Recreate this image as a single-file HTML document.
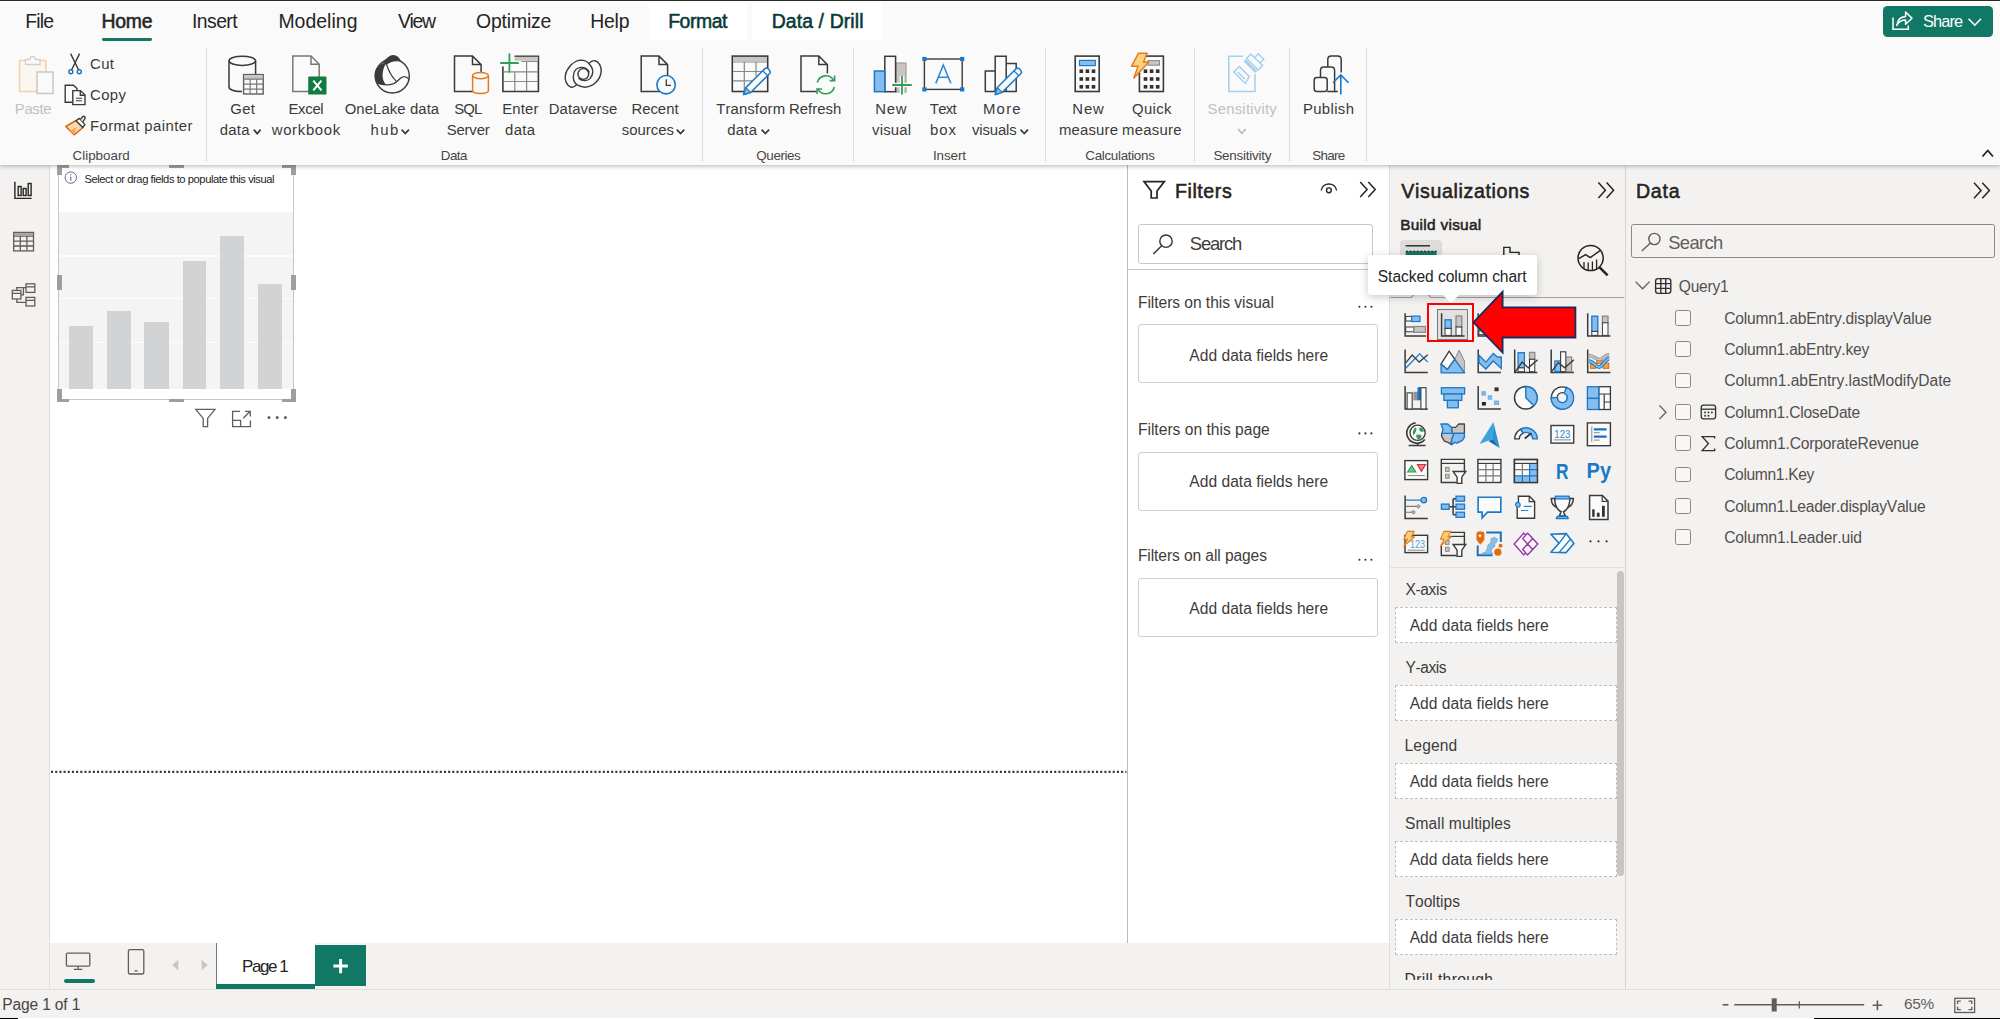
<!DOCTYPE html>
<html lang="en"><head><meta charset="utf-8"><title>Power BI Desktop</title><style>
html,body{margin:0;padding:0}
body{width:2000px;height:1019px;overflow:hidden;position:relative;background:#fff;font-family:"Liberation Sans",sans-serif}
.a{position:absolute}
.t{position:absolute;white-space:nowrap;margin:0;padding:0;font-kerning:none;font-variant-ligatures:none}
svg{position:absolute;left:0;top:0;overflow:visible}
</style></head><body>
<!-- gen_canvas -->
<div class="a" style="left:0.00px;top:164.00px;width:49.40px;height:825.00px;background:#f3f2f1;border-right:1px solid #e1dfdd"></div>
<div class="a" style="left:58.00px;top:164.00px;width:235.80px;height:235.80px;border:1px solid #c8c6c4;box-sizing:border-box;background:#fff"></div>
<div class="a" style="left:59.00px;top:212.20px;width:233.80px;height:176.80px;background:#f4f4f4"></div>
<div class="a" style="left:59.00px;top:254.90px;width:233.80px;height:1.80px;background:#fcfcfc"></div>
<div class="a" style="left:59.00px;top:297.50px;width:233.80px;height:1.80px;background:#fcfcfc"></div>
<div class="a" style="left:59.00px;top:341.50px;width:233.80px;height:1.80px;background:#fcfcfc"></div>
<div class="a" style="left:69.20px;top:325.70px;width:24.10px;height:63.30px;background:#d2d3d5"></div>
<div class="a" style="left:106.80px;top:310.70px;width:24.20px;height:78.30px;background:#d2d3d5"></div>
<div class="a" style="left:144.30px;top:322.20px;width:24.30px;height:66.80px;background:#d2d3d5"></div>
<div class="a" style="left:182.60px;top:260.60px;width:23.70px;height:128.40px;background:#d2d3d5"></div>
<div class="a" style="left:220.20px;top:235.80px;width:23.70px;height:153.20px;background:#d2d3d5"></div>
<div class="a" style="left:257.90px;top:284.10px;width:23.80px;height:104.90px;background:#d2d3d5"></div>
<div class="a" style="left:56.60px;top:165.00px;width:12.60px;height:3.30px;background:#a09e9c"></div>
<div class="a" style="left:56.60px;top:165.00px;width:5.00px;height:10.40px;background:#a09e9c"></div>
<div class="a" style="left:168.50px;top:165.00px;width:15.50px;height:3.40px;background:#a09e9c"></div>
<div class="a" style="left:282.20px;top:165.00px;width:13.50px;height:3.30px;background:#a09e9c"></div>
<div class="a" style="left:290.80px;top:165.00px;width:4.90px;height:10.40px;background:#a09e9c"></div>
<div class="a" style="left:56.60px;top:275.40px;width:5.00px;height:15.10px;background:#a09e9c"></div>
<div class="a" style="left:290.80px;top:275.40px;width:4.90px;height:15.10px;background:#a09e9c"></div>
<div class="a" style="left:56.60px;top:389.20px;width:5.00px;height:13.00px;background:#a09e9c"></div>
<div class="a" style="left:56.60px;top:398.60px;width:12.60px;height:3.60px;background:#a09e9c"></div>
<div class="a" style="left:168.50px;top:398.60px;width:15.50px;height:3.60px;background:#a09e9c"></div>
<div class="a" style="left:282.20px;top:398.60px;width:13.50px;height:3.60px;background:#a09e9c"></div>
<div class="a" style="left:290.80px;top:389.20px;width:4.90px;height:13.00px;background:#a09e9c"></div>
<span class="t" style="left:84.49px;top:171.80px;font-size:11.20px;line-height:15px;letter-spacing:-0.444px;color:#252423;">Select or drag fields to populate this visual</span>
<!-- gen_bottom -->
<div class="a" style="left:50.00px;top:943.00px;width:1339.40px;height:46.00px;background:#f3f2f1"></div>
<div class="a" style="left:0.00px;top:988.80px;width:2000.00px;height:30.20px;background:#f3f2f1;border-top:1px solid #e1dfdd;box-sizing:border-box"></div>
<div class="a" style="left:63.80px;top:979.10px;width:31.10px;height:4.40px;background:#117865;border-radius:2.2px"></div>
<div class="a" style="left:216.40px;top:943.00px;width:98.40px;height:45.60px;background:#fff;border-left:1px solid #7a7876;box-sizing:border-box"></div>
<div class="a" style="left:216.40px;top:983.70px;width:98.40px;height:4.90px;background:#117865"></div>
<span class="t" style="left:242.01px;top:954.60px;font-size:17.00px;line-height:23px;letter-spacing:-1.411px;color:#252423;">Page 1</span>
<div class="a" style="left:314.80px;top:944.90px;width:51.30px;height:41.40px;background:#117865"></div>
<span class="t" style="left:2.32px;top:994.20px;font-size:15.60px;line-height:21px;letter-spacing:-0.176px;color:#484644;">Page 1 of 1</span>
<span class="t" style="left:1903.92px;top:993.30px;font-size:15.40px;line-height:21px;letter-spacing:-0.246px;color:#605e5c;">65%</span>
<div class="a" style="left:0.00px;top:1017.60px;width:2000.00px;height:1.40px;background:#fff"></div>
<div class="a" style="left:0.00px;top:1017.60px;width:18.00px;height:1.40px;background:#000"></div>
<div class="a" style="left:1814.30px;top:1017.60px;width:185.70px;height:1.40px;background:#000"></div>
<!-- gen_filters -->
<div class="a" style="left:1127.00px;top:164.00px;width:262.40px;height:779.00px;background:#fff;border-left:1px solid #bdbbb9;box-sizing:border-box"></div>
<span class="t" style="left:1174.94px;top:177.80px;font-size:19.60px;line-height:26px;letter-spacing:0.577px;color:#252423;-webkit-text-stroke:0.55px #252423;">Filters</span>
<div class="a" style="left:1138.20px;top:224.40px;width:234.50px;height:39.20px;border:1px solid #c8c6c4;border-radius:3px;box-sizing:border-box;background:#fff"></div>
<span class="t" style="left:1189.86px;top:231.80px;font-size:18.40px;line-height:24px;letter-spacing:-1.174px;color:#3e3c3a;">Search</span>
<div class="a" style="left:1128.00px;top:268.60px;width:261.40px;height:1.20px;background:#c8c6c4"></div>
<span class="t" style="left:1137.92px;top:292.00px;font-size:15.60px;line-height:21px;letter-spacing:-0.046px;color:#3e3c3a;">Filters on this visual</span>
<div class="a" style="left:1138.30px;top:324.40px;width:239.80px;height:59.10px;border:1px solid #d2d0ce;border-radius:3px;box-sizing:border-box;background:#fff"></div>
<span class="t" style="left:1189.37px;top:344.50px;font-size:15.60px;line-height:21px;letter-spacing:0.003px;color:#3e3c3a;">Add data fields here</span>
<span class="t" style="left:1137.92px;top:418.60px;font-size:15.60px;line-height:21px;letter-spacing:0.004px;color:#3e3c3a;">Filters on this page</span>
<div class="a" style="left:1138.30px;top:451.70px;width:239.80px;height:59.00px;border:1px solid #d2d0ce;border-radius:3px;box-sizing:border-box;background:#fff"></div>
<span class="t" style="left:1189.37px;top:470.80px;font-size:15.60px;line-height:21px;letter-spacing:0.003px;color:#3e3c3a;">Add data fields here</span>
<span class="t" style="left:1137.92px;top:544.90px;font-size:15.60px;line-height:21px;letter-spacing:-0.094px;color:#3e3c3a;">Filters on all pages</span>
<div class="a" style="left:1138.30px;top:578.30px;width:239.80px;height:58.50px;border:1px solid #d2d0ce;border-radius:3px;box-sizing:border-box;background:#fff"></div>
<span class="t" style="left:1189.37px;top:597.80px;font-size:15.60px;line-height:21px;letter-spacing:0.003px;color:#3e3c3a;">Add data fields here</span>
<!-- gen_viz -->
<div class="a" style="left:1389.40px;top:164.00px;width:235.60px;height:825.00px;background:#f3f2f1;border-left:1px solid #e1dfdd;box-sizing:border-box"></div>
<span class="t" style="left:1401.36px;top:177.70px;font-size:19.60px;line-height:26px;letter-spacing:0.635px;color:#252423;-webkit-text-stroke:0.55px #252423;">Visualizations</span>
<span class="t" style="left:1400.19px;top:214.20px;font-size:15.40px;line-height:21px;letter-spacing:0.291px;color:#252423;-webkit-text-stroke:0.55px #252423;">Build visual</span>
<div class="a" style="left:1400.10px;top:240.30px;width:41.50px;height:49.70px;background:#dddcdb;border-radius:4px"></div>
<div class="a" style="left:1436.60px;top:308.80px;width:31.40px;height:30.80px;background:#e3e2e1;border:1px solid #7a7876;box-sizing:border-box"></div>
<div class="a" style="left:1427.20px;top:303.00px;width:46.60px;height:38.60px;border:2px solid #ff0000;box-sizing:border-box;z-index:3"></div>
<svg width="2000" height="1019" viewBox="0 0 2000 1019" style="z-index:10"><path d="M1473.4 322.3 L1502.6 291.8 V307.3 H1575.4 V337.5 H1502.6 V352.6 Z" fill="#ff0000" stroke="#1f2a5a" stroke-width="1.8" stroke-linejoin="miter"/></svg>
<div class="a" style="left:1390.40px;top:567.00px;width:234.00px;height:1.00px;background:#e1dfdd"></div>
<div class="a" style="left:1617.30px;top:570.80px;width:7.00px;height:304.80px;background:#c8c6c4;border-radius:3.5px"></div>
<span class="t" style="left:1405.45px;top:579.40px;font-size:15.60px;line-height:21px;letter-spacing:-0.366px;color:#3e3c3a;">X-axis</span>
<div class="a" style="left:1395.30px;top:607.20px;width:221.50px;height:35.70px;background:#fff;border:1px dashed #c2c0be;box-sizing:border-box"></div>
<span class="t" style="left:1409.67px;top:614.70px;font-size:15.60px;line-height:21px;letter-spacing:0.019px;color:#3e3c3a;">Add data fields here</span>
<span class="t" style="left:1405.46px;top:657.40px;font-size:15.60px;line-height:21px;letter-spacing:-0.447px;color:#3e3c3a;">Y-axis</span>
<div class="a" style="left:1395.30px;top:685.20px;width:221.50px;height:35.70px;background:#fff;border:1px dashed #c2c0be;box-sizing:border-box"></div>
<span class="t" style="left:1409.67px;top:692.70px;font-size:15.60px;line-height:21px;letter-spacing:0.019px;color:#3e3c3a;">Add data fields here</span>
<span class="t" style="left:1404.52px;top:735.40px;font-size:15.60px;line-height:21px;letter-spacing:0.146px;color:#3e3c3a;">Legend</span>
<div class="a" style="left:1395.30px;top:763.20px;width:221.50px;height:35.70px;background:#fff;border:1px dashed #c2c0be;box-sizing:border-box"></div>
<span class="t" style="left:1409.67px;top:770.70px;font-size:15.60px;line-height:21px;letter-spacing:0.019px;color:#3e3c3a;">Add data fields here</span>
<span class="t" style="left:1405.09px;top:813.40px;font-size:15.60px;line-height:21px;letter-spacing:0.070px;color:#3e3c3a;">Small multiples</span>
<div class="a" style="left:1395.30px;top:841.20px;width:221.50px;height:35.70px;background:#fff;border:1px dashed #c2c0be;box-sizing:border-box"></div>
<span class="t" style="left:1409.67px;top:848.70px;font-size:15.60px;line-height:21px;letter-spacing:0.019px;color:#3e3c3a;">Add data fields here</span>
<span class="t" style="left:1405.45px;top:891.40px;font-size:15.60px;line-height:21px;letter-spacing:-0.001px;color:#3e3c3a;">Tooltips</span>
<div class="a" style="left:1395.30px;top:919.20px;width:221.50px;height:35.70px;background:#fff;border:1px dashed #c2c0be;box-sizing:border-box"></div>
<span class="t" style="left:1409.67px;top:926.70px;font-size:15.60px;line-height:21px;letter-spacing:0.019px;color:#3e3c3a;">Add data fields here</span>
<div class="a" style="left:1395px;top:960px;width:220px;height:20px;overflow:hidden"><span class="t" style="left:9.52px;top:9.40px;font-size:15.60px;line-height:21px;letter-spacing:0.366px;color:#323130;">Drill through</span></div>
<div class="a" style="left:1367.80px;top:254.80px;width:169.00px;height:40.20px;background:#fff;border-radius:3px;box-shadow:0 2px 9px rgba(0,0,0,.22);z-index:8"></div>
<div class="a" style="left:1443.2px;top:294.8px;width:0;height:0;border-left:8.6px solid transparent;border-right:8.6px solid transparent;border-top:8px solid #fff;z-index:9"></div>
<span class="t" style="left:1377.79px;top:265.80px;font-size:15.60px;line-height:21px;letter-spacing:-0.062px;color:#252423;z-index:9;">Stacked column chart</span>
<!-- gen_data -->
<div class="a" style="left:1624.50px;top:164.00px;width:375.50px;height:825.00px;background:#f3f2f1;border-left:1px solid #d6d4d2;box-sizing:border-box"></div>
<span class="t" style="left:1635.94px;top:178.00px;font-size:19.60px;line-height:26px;letter-spacing:0.769px;color:#252423;-webkit-text-stroke:0.55px #252423;">Data</span>
<div class="a" style="left:1631.20px;top:224.30px;width:363.70px;height:33.90px;border:1px solid #8a8886;border-radius:2.5px;box-sizing:border-box;background:#f3f2f1"></div>
<span class="t" style="left:1668.26px;top:230.60px;font-size:18.40px;line-height:24px;letter-spacing:-0.654px;color:#605e5c;">Search</span>
<span class="t" style="left:1678.76px;top:275.80px;font-size:15.60px;line-height:21px;letter-spacing:-0.231px;color:#514f4d;">Query1</span>
<span class="t" style="left:1724.21px;top:307.50px;font-size:15.60px;line-height:21px;letter-spacing:-0.212px;color:#514f4d;">Column1.abEntry.displayValue</span>
<div class="a" style="left:1675.40px;top:310.00px;width:15.60px;height:15.60px;border:1px solid #8a8886;border-radius:2.5px;box-sizing:border-box;background:#f8f7f6"></div>
<span class="t" style="left:1724.21px;top:338.85px;font-size:15.60px;line-height:21px;letter-spacing:-0.223px;color:#514f4d;">Column1.abEntry.key</span>
<div class="a" style="left:1675.40px;top:341.35px;width:15.60px;height:15.60px;border:1px solid #8a8886;border-radius:2.5px;box-sizing:border-box;background:#f8f7f6"></div>
<span class="t" style="left:1724.21px;top:370.20px;font-size:15.60px;line-height:21px;letter-spacing:-0.033px;color:#514f4d;">Column1.abEntry.lastModifyDate</span>
<div class="a" style="left:1675.40px;top:372.70px;width:15.60px;height:15.60px;border:1px solid #8a8886;border-radius:2.5px;box-sizing:border-box;background:#f8f7f6"></div>
<span class="t" style="left:1724.21px;top:401.55px;font-size:15.60px;line-height:21px;letter-spacing:-0.226px;color:#514f4d;">Column1.CloseDate</span>
<div class="a" style="left:1675.40px;top:404.05px;width:15.60px;height:15.60px;border:1px solid #8a8886;border-radius:2.5px;box-sizing:border-box;background:#f8f7f6"></div>
<span class="t" style="left:1724.21px;top:432.90px;font-size:15.60px;line-height:21px;letter-spacing:-0.161px;color:#514f4d;">Column1.CorporateRevenue</span>
<div class="a" style="left:1675.40px;top:435.40px;width:15.60px;height:15.60px;border:1px solid #8a8886;border-radius:2.5px;box-sizing:border-box;background:#f8f7f6"></div>
<span class="t" style="left:1724.21px;top:464.25px;font-size:15.60px;line-height:21px;letter-spacing:-0.352px;color:#514f4d;">Column1.Key</span>
<div class="a" style="left:1675.40px;top:466.75px;width:15.60px;height:15.60px;border:1px solid #8a8886;border-radius:2.5px;box-sizing:border-box;background:#f8f7f6"></div>
<span class="t" style="left:1724.21px;top:495.60px;font-size:15.60px;line-height:21px;letter-spacing:-0.256px;color:#514f4d;">Column1.Leader.displayValue</span>
<div class="a" style="left:1675.40px;top:498.10px;width:15.60px;height:15.60px;border:1px solid #8a8886;border-radius:2.5px;box-sizing:border-box;background:#f8f7f6"></div>
<span class="t" style="left:1724.21px;top:526.95px;font-size:15.60px;line-height:21px;letter-spacing:-0.158px;color:#514f4d;">Column1.Leader.uid</span>
<div class="a" style="left:1675.40px;top:529.45px;width:15.60px;height:15.60px;border:1px solid #8a8886;border-radius:2.5px;box-sizing:border-box;background:#f8f7f6"></div>
<!-- gen_ribbon -->
<div class="a" style="left:0.00px;top:0.00px;width:2000.00px;height:164.60px;background:#fafafa;box-shadow:0 0.5px 4.5px rgba(0,0,0,.30);z-index:5"></div>
<div class="a" style="left:0.00px;top:0.00px;width:2000.00px;height:1.20px;background:#2b2a29;z-index:6"></div>
<div class="a" style="left:0.00px;top:1.20px;width:2000.00px;height:1.80px;background:#fff;z-index:6"></div>
<div class="a" style="left:648.80px;top:3.00px;width:98.10px;height:37.30px;background:#fff;z-index:6"></div>
<div class="a" style="left:751.80px;top:3.00px;width:129.80px;height:37.30px;background:#fff;z-index:6"></div>
<div class="a" style="left:102.00px;top:37.50px;width:50.20px;height:3.10px;background:#117865;border-radius:1.4px;z-index:6"></div>
<span class="t" style="left:25.21px;top:8.20px;font-size:19.40px;line-height:26px;letter-spacing:-0.802px;color:#252423;z-index:7;">File</span>
<span class="t" style="left:101.46px;top:8.20px;font-size:19.40px;line-height:26px;letter-spacing:-0.199px;color:#252423;-webkit-text-stroke:0.55px #252423;z-index:7;">Home</span>
<span class="t" style="left:192.01px;top:8.20px;font-size:19.40px;line-height:26px;letter-spacing:-0.577px;color:#252423;z-index:7;">Insert</span>
<span class="t" style="left:278.41px;top:8.20px;font-size:19.40px;line-height:26px;letter-spacing:0.045px;color:#252423;z-index:7;">Modeling</span>
<span class="t" style="left:397.91px;top:8.20px;font-size:19.40px;line-height:26px;letter-spacing:-1.337px;color:#252423;z-index:7;">View</span>
<span class="t" style="left:476.08px;top:8.20px;font-size:19.40px;line-height:26px;letter-spacing:-0.180px;color:#252423;z-index:7;">Optimize</span>
<span class="t" style="left:590.21px;top:8.20px;font-size:19.40px;line-height:26px;letter-spacing:-0.198px;color:#252423;z-index:7;">Help</span>
<span class="t" style="left:668.16px;top:8.20px;font-size:19.40px;line-height:26px;letter-spacing:-0.441px;color:#0b3a38;-webkit-text-stroke:0.55px #0b3a38;z-index:7;">Format</span>
<span class="t" style="left:771.66px;top:8.20px;font-size:19.40px;line-height:26px;letter-spacing:0.122px;color:#0b3a38;-webkit-text-stroke:0.55px #0b3a38;z-index:7;">Data / Drill</span>
<div class="a" style="left:1883.10px;top:6.20px;width:109.50px;height:31.20px;background:#117865;border-radius:4.5px;z-index:6"></div>
<span class="t" style="left:1923.06px;top:9.90px;font-size:16.40px;line-height:22px;letter-spacing:-0.897px;color:#fff;z-index:7;">Share</span>
<div class="a" style="left:205.50px;top:48.30px;width:1.20px;height:114.00px;background:#dcdbda;z-index:6"></div>
<div class="a" style="left:701.90px;top:48.30px;width:1.20px;height:114.00px;background:#dcdbda;z-index:6"></div>
<div class="a" style="left:853.30px;top:48.30px;width:1.20px;height:114.00px;background:#dcdbda;z-index:6"></div>
<div class="a" style="left:1045.20px;top:48.30px;width:1.20px;height:114.00px;background:#dcdbda;z-index:6"></div>
<div class="a" style="left:1194.20px;top:48.30px;width:1.20px;height:114.00px;background:#dcdbda;z-index:6"></div>
<div class="a" style="left:1289.20px;top:48.30px;width:1.20px;height:114.00px;background:#dcdbda;z-index:6"></div>
<div class="a" style="left:1366.30px;top:48.30px;width:1.20px;height:114.00px;background:#dcdbda;z-index:6"></div>
<span class="t" style="left:14.78px;top:99.40px;font-size:14.90px;line-height:20px;letter-spacing:-0.304px;color:#c2c0be;z-index:7;">Paste</span>
<span class="t" style="left:90.04px;top:53.70px;font-size:14.90px;line-height:20px;letter-spacing:0.390px;color:#3b3a39;z-index:7;">Cut</span>
<span class="t" style="left:90.04px;top:85.10px;font-size:14.90px;line-height:20px;letter-spacing:0.401px;color:#3b3a39;z-index:7;">Copy</span>
<span class="t" style="left:89.98px;top:116.20px;font-size:14.90px;line-height:20px;letter-spacing:0.429px;color:#3b3a39;z-index:7;">Format painter</span>
<span class="t" style="left:230.25px;top:99.40px;font-size:14.90px;line-height:20px;letter-spacing:0.321px;color:#3b3a39;z-index:7;">Get</span>
<span class="t" style="left:219.77px;top:120.00px;font-size:14.90px;line-height:20px;letter-spacing:0.242px;color:#3b3a39;z-index:7;">data</span>
<span class="t" style="left:288.48px;top:99.40px;font-size:14.90px;line-height:20px;letter-spacing:-0.304px;color:#3b3a39;z-index:7;">Excel</span>
<span class="t" style="left:271.72px;top:120.00px;font-size:14.90px;line-height:20px;letter-spacing:0.684px;color:#3b3a39;z-index:7;">workbook</span>
<span class="t" style="left:344.69px;top:99.40px;font-size:14.90px;line-height:20px;letter-spacing:0.081px;color:#3b3a39;z-index:7;">OneLake data</span>
<span class="t" style="left:370.57px;top:120.00px;font-size:14.90px;line-height:20px;letter-spacing:1.449px;color:#3b3a39;z-index:7;">hub</span>
<span class="t" style="left:454.32px;top:99.40px;font-size:14.90px;line-height:20px;letter-spacing:-0.922px;color:#3b3a39;z-index:7;">SQL</span>
<span class="t" style="left:446.72px;top:120.00px;font-size:14.90px;line-height:20px;letter-spacing:-0.172px;color:#3b3a39;z-index:7;">Server</span>
<span class="t" style="left:502.18px;top:99.40px;font-size:14.90px;line-height:20px;letter-spacing:0.164px;color:#3b3a39;z-index:7;">Enter</span>
<span class="t" style="left:505.07px;top:120.00px;font-size:14.90px;line-height:20px;letter-spacing:0.309px;color:#3b3a39;z-index:7;">data</span>
<span class="t" style="left:548.78px;top:99.40px;font-size:14.90px;line-height:20px;letter-spacing:0.084px;color:#3b3a39;z-index:7;">Dataverse</span>
<span class="t" style="left:631.38px;top:99.40px;font-size:14.90px;line-height:20px;letter-spacing:0.004px;color:#3b3a39;z-index:7;">Recent</span>
<span class="t" style="left:621.69px;top:120.00px;font-size:14.90px;line-height:20px;letter-spacing:0.014px;color:#3b3a39;z-index:7;">sources</span>
<span class="t" style="left:716.17px;top:99.40px;font-size:14.90px;line-height:20px;letter-spacing:0.129px;color:#3b3a39;z-index:7;">Transform</span>
<span class="t" style="left:727.37px;top:120.00px;font-size:14.90px;line-height:20px;letter-spacing:0.209px;color:#3b3a39;z-index:7;">data</span>
<span class="t" style="left:788.88px;top:99.40px;font-size:14.90px;line-height:20px;letter-spacing:0.036px;color:#3b3a39;z-index:7;">Refresh</span>
<span class="t" style="left:875.28px;top:99.40px;font-size:14.90px;line-height:20px;letter-spacing:0.689px;color:#3b3a39;z-index:7;">New</span>
<span class="t" style="left:872.05px;top:120.00px;font-size:14.90px;line-height:20px;letter-spacing:0.171px;color:#3b3a39;z-index:7;">visual</span>
<span class="t" style="left:929.87px;top:99.40px;font-size:14.90px;line-height:20px;letter-spacing:-0.711px;color:#3b3a39;z-index:7;">Text</span>
<span class="t" style="left:930.04px;top:120.00px;font-size:14.90px;line-height:20px;letter-spacing:0.899px;color:#3b3a39;z-index:7;">box</span>
<span class="t" style="left:982.98px;top:99.40px;font-size:14.90px;line-height:20px;letter-spacing:1.246px;color:#3b3a39;z-index:7;">More</span>
<span class="t" style="left:972.05px;top:120.00px;font-size:14.90px;line-height:20px;letter-spacing:-0.159px;color:#3b3a39;z-index:7;">visuals</span>
<span class="t" style="left:1072.28px;top:99.40px;font-size:14.90px;line-height:20px;letter-spacing:0.889px;color:#3b3a39;z-index:7;">New</span>
<span class="t" style="left:1058.91px;top:120.00px;font-size:14.90px;line-height:20px;letter-spacing:0.180px;color:#3b3a39;z-index:7;">measure</span>
<span class="t" style="left:1131.99px;top:99.40px;font-size:14.90px;line-height:20px;letter-spacing:0.349px;color:#3b3a39;z-index:7;">Quick</span>
<span class="t" style="left:1122.01px;top:120.00px;font-size:14.90px;line-height:20px;letter-spacing:0.247px;color:#3b3a39;z-index:7;">measure</span>
<span class="t" style="left:1207.52px;top:99.40px;font-size:14.90px;line-height:20px;letter-spacing:0.223px;color:#c2c0be;z-index:7;">Sensitivity</span>
<span class="t" style="left:1302.88px;top:99.40px;font-size:14.90px;line-height:20px;letter-spacing:0.370px;color:#3b3a39;z-index:7;">Publish</span>
<span class="t" style="left:72.62px;top:147.00px;font-size:13.40px;line-height:18px;letter-spacing:-0.014px;color:#484644;z-index:7;">Clipboard</span>
<span class="t" style="left:440.80px;top:147.00px;font-size:13.40px;line-height:18px;letter-spacing:-0.569px;color:#484644;z-index:7;">Data</span>
<span class="t" style="left:756.37px;top:147.00px;font-size:13.40px;line-height:18px;letter-spacing:-0.417px;color:#484644;z-index:7;">Queries</span>
<span class="t" style="left:932.96px;top:147.00px;font-size:13.40px;line-height:18px;letter-spacing:-0.096px;color:#484644;z-index:7;">Insert</span>
<span class="t" style="left:1085.32px;top:147.00px;font-size:13.40px;line-height:18px;letter-spacing:-0.312px;color:#484644;z-index:7;">Calculations</span>
<span class="t" style="left:1213.39px;top:147.00px;font-size:13.40px;line-height:18px;letter-spacing:-0.228px;color:#484644;z-index:7;">Sensitivity</span>
<span class="t" style="left:1312.19px;top:147.00px;font-size:13.40px;line-height:18px;letter-spacing:-0.663px;color:#484644;z-index:7;">Share</span>
<svg width="2000" height="1019" viewBox="0 0 2000 1019" style="z-index:4">
<!-- gen_canvas -->
<g fill="none" stroke="#252423" stroke-width="1.4"><path d="M14.9 181.8 V198.4 H31.6"/><rect x="18.2" y="186.5" width="2.9" height="9"/><rect x="23.2" y="188.5" width="2.9" height="7"/><rect x="28.2" y="183.5" width="2.9" height="12"/></g>
<g fill="none" stroke="#605e5c" stroke-width="1.3"><rect x="13.7" y="232.4" width="19.8" height="18.5"/><path d="M13.7 236.2 H33.5 M13.7 241.2 H33.5 M13.7 246 H33.5 M20.3 236.2 V251 M26.9 236.2 V251"/><path d="M14 234.2 H33" stroke="#a19f9d" stroke-width="2"/></g>
<g fill="none" stroke="#605e5c" stroke-width="1.3"><rect x="12.3" y="290.4" width="8.6" height="8.6"/><rect x="26" y="283.8" width="8.8" height="8.6"/><rect x="26" y="297.4" width="8.8" height="8.6"/><path d="M12.3 293.4 H20.9 M26 286.8 H34.8 M26 300.4 H34.8 M16.8 290.4 V287.6 H26 M16.8 299 V302.4 H26 M20.9 294.8 H23.4 V288"/></g>
<circle cx="70.8" cy="177.6" r="5.7" fill="none" stroke="#4a5a78" stroke-width="0.9"/><path d="M70.8 176.6 V180.8" stroke="#4a5a78" stroke-width="1"/><circle cx="70.8" cy="174.7" r="0.6" fill="#4a5a78"/>
<g fill="none" stroke="#605e5c" stroke-width="1.3"><path d="M195.8 409.4 H215 L207.6 418.4 V426.6 H203.2 V418.4 Z" stroke-linejoin="miter"/><path d="M240 411.4 H232.6 V426.6 H250.4 V420.5 M232.6 420.3 H240.6 V426.6"/><path d="M243.2 418.3 L250.2 411.3 M245 411.3 H250.3 V416.6"/></g>
<circle cx="269.0" cy="417.5" r="1.5" fill="#605e5c"/>
<circle cx="277.2" cy="417.5" r="1.5" fill="#605e5c"/>
<circle cx="285.4" cy="417.5" r="1.5" fill="#605e5c"/>
<path d="M51 771.9 H1126.4" stroke="#3a3a3a" stroke-width="2.1" stroke-dasharray="2.1 2.08" fill="none"/>
<!-- gen_bottom -->
<g fill="none" stroke="#605e5c" stroke-width="1.3"><rect x="66.4" y="953.1" width="23.4" height="13" rx="1"/><path d="M78.1 966.1 V969.4 M73.8 969.4 H82.4"/></g>
<g fill="none" stroke="#605e5c" stroke-width="1.3"><rect x="128.4" y="949.6" width="15.4" height="24.4" rx="1.6"/><path d="M134.6 970.9 H137.6"/></g>
<path d="M178.4 959.8 L172.2 965.1 L178.4 970.4 Z" fill="#c8c6c4"/><path d="M201.6 959.8 L207.8 965.1 L201.6 970.4 Z" fill="#c8c6c4"/>
<path d="M340.6 958.9 V973.2 M333.4 966 H347.8" stroke="#fff" stroke-width="3" fill="none"/>
<g stroke="#605e5c" fill="none"><path d="M1722.6 1004.8 H1728.4" stroke-width="1.6"/><path d="M1734.2 1004.8 H1864.2" stroke-width="1.4"/><path d="M1799.3 1001.3 V1008.5" stroke-width="1.3"/><path d="M1872.6 1005.3 H1882.2 M1877.4 1000.4 V1010.2" stroke-width="1.6"/></g>
<rect x="1771.7" y="998.3" width="5" height="13.2" fill="#605e5c"/>
<g fill="none" stroke="#605e5c" stroke-width="1.3"><rect x="1954.8" y="998.3" width="19.8" height="14.2"/><path d="M1957.6 1004 V1001.2 H1960.8 M1968.6 1001.2 H1971.8 V1004 M1971.8 1006.8 V1009.6 H1968.6 M1960.8 1009.6 H1957.6 V1006.8"/></g>
<!-- gen_filters -->
<path d="M1144 181.6 H1164.4 L1157 191 V198 H1151.2 V191 Z" fill="none" stroke="#252423" stroke-width="1.7" stroke-linejoin="miter"/>
<g fill="none" stroke="#252423" stroke-width="1.4"><path d="M1321.2 190.5 C1322.5 181.8 1335.3 181.8 1336.6 190.5"/><circle cx="1328.9" cy="190.3" r="2.4"/></g>
<path d="M1360.20 182.00 L1367.10 189.50 L1360.20 197.00 M1368.30 182.00 L1375.20 189.50 L1368.30 197.00" fill="none" stroke="#252423" stroke-width="1.50"/>
<g fill="none" stroke="#323130" stroke-width="1.4"><circle cx="1166" cy="241.2" r="6.2"/><path d="M1161.6 245.7 L1153.4 254"/></g>
<circle cx="1359.4" cy="306.8" r="1.05" fill="#323130"/>
<circle cx="1365.4" cy="306.8" r="1.05" fill="#323130"/>
<circle cx="1371.4" cy="306.8" r="1.05" fill="#323130"/>
<circle cx="1359.4" cy="433.4" r="1.05" fill="#323130"/>
<circle cx="1365.4" cy="433.4" r="1.05" fill="#323130"/>
<circle cx="1371.4" cy="433.4" r="1.05" fill="#323130"/>
<circle cx="1359.4" cy="559.7" r="1.05" fill="#323130"/>
<circle cx="1365.4" cy="559.7" r="1.05" fill="#323130"/>
<circle cx="1371.4" cy="559.7" r="1.05" fill="#323130"/>
<!-- gen_viz -->
<path d="M1598.40 182.60 L1605.40 190.30 L1598.40 198.00 M1606.60 182.60 L1613.60 190.30 L1606.60 198.00" fill="none" stroke="#252423" stroke-width="1.50"/>
<path d="M1405.6 245.8 H1430" stroke="#252423" stroke-width="1.4"/><rect x="1405.6" y="251.3" width="31" height="4" fill="#117865"/><path d="M1406 251.3 H1436.6" stroke="#252423" stroke-width="1.2" stroke-dasharray="2 1.6"/>
<path d="M1503.8 262 V247.4 H1510 V252.4 H1519 V262" fill="none" stroke="#252423" stroke-width="1.4"/>
<g fill="none" stroke="#252423"><circle cx="1590.6" cy="258" r="12.6" stroke-width="1.5"/><path d="M1599.6 267.4 L1607.6 275.4" stroke-width="2.6"/><path d="M1578.8 258.6 L1585.6 254.6 L1590.2 257.6 L1600.4 250.4" stroke-width="1.4"/><path d="M1584 262 V268.8 M1588.2 262.6 V270.4 M1592.4 261.6 V270.4 M1596.6 259.6 V268.8" stroke-width="1.3"/></g>
<path d="M1390.4 297.5 H1411.2 L1415.5 293.2 M1426.5 293.2 L1430.8 297.5 H1624.4" fill="none" stroke="#a3a19f" stroke-width="1.1"/>
<g transform="translate(1404.20 313.20)" ><path d="M0.9 0 V22.9 H22" fill="none" stroke="#3a3a3a" stroke-width="1.5" /><rect x="1.6" y="3.2" width="5.8" height="4.6" fill="#fbfbfb" stroke="#3a3a3a" stroke-width="1.0"/><rect x="7.4" y="2.9" width="8.4" height="5.4" fill="#86bdec" stroke="#1a78c8" stroke-width="1.2"/><rect x="1.6" y="13.8" width="8.2" height="4.8" fill="#fbfbfb" stroke="#3a3a3a" stroke-width="1.0"/><rect x="9.8" y="13.3" width="11.4" height="5.8" fill="#c8c6c4" stroke="#8a8886" stroke-width="1.2"/></g>
<g transform="translate(1440.60 313.20)" ><path d="M1 0 V22.9 H24" fill="none" stroke="#3a3a3a" stroke-width="1.5" /><rect x="4.4" y="6.6" width="6.2" height="8.6" fill="#86bdec" stroke="#1a78c8" stroke-width="1.3"/><rect x="4.4" y="15.2" width="6.2" height="7.0" fill="#fbfbfb" stroke="#3a3a3a" stroke-width="1.0"/><rect x="15.4" y="2.8" width="5.8" height="11.0" fill="#c8c6c4" stroke="#8a8886" stroke-width="1.3"/><rect x="15.4" y="13.8" width="5.8" height="8.4" fill="#fbfbfb" stroke="#3a3a3a" stroke-width="1.0"/></g>
<g transform="translate(1477.30 313.20)" ><path d="M0.9 0 V22.9 H22" fill="none" stroke="#3a3a3a" stroke-width="1.5" /><rect x="1.6" y="2.5" width="11.4" height="4.0" fill="#86bdec" stroke="#1a78c8" stroke-width="1.2"/><rect x="1.6" y="6.5" width="6.4" height="4.0" fill="#fbfbfb" stroke="#3a3a3a" stroke-width="1.0"/><rect x="1.6" y="13.5" width="17.4" height="4.0" fill="#c8c6c4" stroke="#8a8886" stroke-width="1.2"/><rect x="1.6" y="17.5" width="9.4" height="4.0" fill="#fbfbfb" stroke="#3a3a3a" stroke-width="1.0"/></g>
<g transform="translate(1513.80 313.20)" ><path d="M0.9 0 V22.9 H23.6" fill="none" stroke="#3a3a3a" stroke-width="1.5"/><rect x="4.0" y="8.0" width="4.0" height="14.0" fill="#86bdec" stroke="#1a78c8" stroke-width="1.2"/><rect x="8.0" y="3.0" width="4.0" height="19.0" fill="#fbfbfb" stroke="#3a3a3a" stroke-width="1.0"/><rect x="15.0" y="10.0" width="4.0" height="12.0" fill="#c8c6c4" stroke="#8a8886" stroke-width="1.2"/></g>
<g transform="translate(1550.30 313.20)" ><path d="M0.9 0 V22.9 H22" fill="none" stroke="#3a3a3a" stroke-width="1.5" /><rect x="1.6" y="3.0" width="19.4" height="5.0" fill="#86bdec" stroke="#1a78c8" stroke-width="1.2"/><rect x="1.6" y="13.5" width="19.4" height="5.0" fill="#c8c6c4" stroke="#8a8886" stroke-width="1.2"/></g>
<g transform="translate(1586.80 313.20)" ><path d="M0.9 0 V22.9 H23.6" fill="none" stroke="#3a3a3a" stroke-width="1.5"/><rect x="5.0" y="3.0" width="6.0" height="15.2" fill="#86bdec" stroke="#1a78c8" stroke-width="1.3"/><rect x="5.0" y="18.2" width="6.0" height="4.0" fill="#fbfbfb" stroke="#3a3a3a" stroke-width="1.0"/><rect x="15.6" y="3.0" width="5.6" height="6.6" fill="#c8c6c4" stroke="#8a8886" stroke-width="1.3"/><rect x="15.6" y="9.6" width="5.6" height="12.6" fill="#fbfbfb" stroke="#3a3a3a" stroke-width="1.0"/></g>
<g transform="translate(1404.20 349.50)" ><path d="M0.9 0 V22.9 H23.6" fill="none" stroke="#3a3a3a" stroke-width="1.5"/><path d="M1.2 19 L15.5 4.4 L23.5 12.6" fill="none" stroke="#1a78c8" stroke-width="1.3" /><path d="M1.7 13.2 L8 5.5 L15 12.6 L23.5 5.2" fill="none" stroke="#3a3a3a" stroke-width="1.3" /></g>
<g transform="translate(1440.80 349.50)" ><path d="M14 9.8 L18.3 0.6 L23.6 11.5 V23 Z" fill="#c8c6c4" stroke="#8a8886" stroke-width="1.0" /><path d="M0.2 14.6 L8.3 1.7 L14 9.8 L6.6 20 Z" fill="#fbfbfb" stroke="#3a3a3a" stroke-width="1.3" /><path d="M0.3 15 L6.6 20 L14 9.8 L23.8 23.4 H0.3 Z" fill="#86bdec" stroke="#1a78c8" stroke-width="1.3" stroke-linejoin="round"/></g>
<g transform="translate(1477.30 349.50)" ><path d="M0.9 0 V22.9 H23.6" fill="none" stroke="#3a3a3a" stroke-width="1.5"/><path d="M1.7 5.7 L8.6 12.6 L16 4 L20 7.5 H24 V19 L16 11.5 L8.6 19.5 L1.7 13.2 Z" fill="#86bdec" stroke="#1a78c8" stroke-width="1.3" /></g>
<g transform="translate(1513.80 349.50)" ><path d="M0.9 0 V22.9 H23.6" fill="none" stroke="#3a3a3a" stroke-width="1.5"/><rect x="4.3" y="3.2" width="6.3" height="15.2" fill="#86bdec" stroke="#1a78c8" stroke-width="1.3"/><rect x="4.3" y="18.4" width="6.3" height="3.8" fill="#fbfbfb" stroke="#3a3a3a" stroke-width="1.0"/><rect x="15.7" y="2.9" width="5.3" height="6.9" fill="#c8c6c4" stroke="#8a8886" stroke-width="1.3"/><rect x="15.7" y="9.8" width="5.3" height="12.4" fill="#fbfbfb" stroke="#3a3a3a" stroke-width="1.0"/><path d="M1.4 22.4 L8.3 12.6 L14.6 18.4 L23.8 10.3" fill="none" stroke="#3a3a3a" stroke-width="1.4" /></g>
<g transform="translate(1550.30 349.50)" ><path d="M0.9 0 V22.9 H23.6" fill="none" stroke="#3a3a3a" stroke-width="1.5"/><rect x="4.6" y="11.5" width="5.7" height="10.7" fill="#86bdec" stroke="#1a78c8" stroke-width="1.3"/><rect x="10.3" y="2.3" width="5.2" height="19.9" fill="#fbfbfb" stroke="#3a3a3a" stroke-width="1.1"/><rect x="16.0" y="7.5" width="5.3" height="14.7" fill="#c8c6c4" stroke="#8a8886" stroke-width="1.2"/><path d="M1.1 22.4 L8 13.2 L14.4 18.4 L23.6 10.3" fill="none" stroke="#3a3a3a" stroke-width="1.4" /></g>
<g transform="translate(1586.80 349.50)" ><rect x="3.6" y="14.6" width="5.2" height="4.2" fill="#f7a73a" stroke="#d9690f" stroke-width="1.0"/><rect x="16.4" y="13.6" width="5.6" height="5.2" fill="#f7a73a" stroke="#d9690f" stroke-width="1.0"/><rect x="10.0" y="10.6" width="5.4" height="3.2" fill="#f7a73a" stroke="#d9690f" stroke-width="1.0"/><path d="M2.2 6 C7 6 8.5 10 12.2 10 C16 10 18 5.4 22.4 5.2" fill="none" stroke="#8a8886" stroke-width="3.4" /><path d="M2.2 6 C7 6 8.5 10 12.2 10 C16 10 18 5.4 22.4 5.2" fill="none" stroke="#c8c6c4" stroke-width="1.8" /><path d="M2.2 11.6 C7 11.6 8.5 17.6 12.2 17.6 C16 17.6 18 9.4 22.4 9.4" fill="none" stroke="#1a78c8" stroke-width="3.8" /><path d="M2.2 11.6 C7 11.6 8.5 17.6 12.2 17.6 C16 17.6 18 9.4 22.4 9.4" fill="none" stroke="#86bdec" stroke-width="1.8" /><path d="M0.9 0 V22.9 H23.6" fill="none" stroke="#3a3a3a" stroke-width="1.5"/></g>
<g transform="translate(1404.20 386.00)" ><path d="M0.9 0 V22.9 H23.6" fill="none" stroke="#3a3a3a" stroke-width="1.5"/><rect x="2.9" y="6.9" width="5.1" height="16.1" fill="#fbfbfb" stroke="#3a3a3a" stroke-width="1.1"/><rect x="9.8" y="6.3" width="4.0" height="7.5" fill="#9a9896" stroke="#8a8886" stroke-width="1.0"/><rect x="13.8" y="1.7" width="2.9" height="12.1" fill="#1a6fc0" stroke="#1a78c8" stroke-width="1.0"/><rect x="16.7" y="1.7" width="5.1" height="21.3" fill="#fbfbfb" stroke="#3a3a3a" stroke-width="1.1"/></g>
<g transform="translate(1440.80 386.00)" ><rect x="0.6" y="1.7" width="23.2" height="6.3" fill="#86bdec" stroke="#1a78c8" stroke-width="1.3"/><rect x="3.1" y="8.0" width="17.9" height="6.4" fill="#86bdec" stroke="#1a78c8" stroke-width="1.3"/><rect x="6.6" y="14.4" width="10.9" height="7.4" fill="#86bdec" stroke="#1a78c8" stroke-width="1.3"/></g>
<g transform="translate(1477.30 386.00)" ><path d="M0.9 0 V22.9 H23.6" fill="none" stroke="#3a3a3a" stroke-width="1.5"/><rect x="17.2" y="1.4" width="4.1" height="3.8" fill="#323130"/><rect x="4.6" y="5.7" width="3.4" height="3.5" fill="#86bdec" stroke="#5ea6e0" stroke-width="0.8"/><rect x="10.9" y="9.8" width="3.5" height="3.4" fill="#86bdec" stroke="#5ea6e0" stroke-width="0.8"/><rect x="17.2" y="15.0" width="4.1" height="3.4" fill="#86bdec" stroke="#5ea6e0" stroke-width="0.8"/><rect x="4.6" y="16.0" width="4.0" height="3.5" fill="#252423"/></g>
<g transform="translate(1513.80 386.00)" ><circle cx="12.0" cy="11.8" r="11.3" fill="#fbfbfb" stroke="#3a3a3a" stroke-width="1.5"/><path d="M12 11.8 V0.5 A11.3 11.3 0 0 1 20 19.8 Z" fill="#86bdec" stroke="#1a78c8" stroke-width="1.4" stroke-linejoin="round"/></g>
<g transform="translate(1550.30 386.00)" ><circle cx="12.0" cy="11.8" r="8.1" fill="none" stroke="#3a3a3a" stroke-width="7.0"/><circle cx="12.0" cy="11.8" r="8.1" fill="none" stroke="#fbfbfb" stroke-width="4.4"/><path d="M16 1.2 A11.4 11.4 0 1 1 0.7 11.6 H7.3 A4.8 4.8 0 1 0 14 7.4 Z" fill="#86bdec" stroke="#1a78c8" stroke-width="1.4" stroke-linejoin="round"/></g>
<g transform="translate(1586.80 386.00)" ><rect x="12.0" y="0.7" width="11.6" height="22.8" fill="#fbfbfb" stroke="#3a3a3a" stroke-width="1.3"/><path d="M12 8 H23.6 M17.4 8 V23.5 M17.4 16 H23.6" fill="none" stroke="#3a3a3a" stroke-width="1.2" /><rect x="0.6" y="0.7" width="11.4" height="11.7" fill="#86bdec" stroke="#1a78c8" stroke-width="1.3"/><rect x="0.6" y="12.4" width="11.4" height="11.1" fill="#86bdec" stroke="#1a78c8" stroke-width="1.3"/></g>
<g transform="translate(1404.20 422.50)" ><circle cx="13.4" cy="10.3" r="7.6" fill="#fdfdfd" stroke="#3a3a3a" stroke-width="1.3"/><path d="M10.5 5.6 C11.6 4.4 12.6 5.4 12.2 7.2 C11.8 9.4 10.4 11.6 9 13 C8.2 11 8.6 7.6 10.5 5.6 Z M15.6 5 C17.6 4.6 19.4 6.4 19.8 8.4 C18.6 9.8 16.4 9.6 15.4 8 C14.8 7 15 5.6 15.6 5 Z M12 12.6 C14 11.6 16.6 12 17.4 13.4 C17 15.6 15.6 16.8 14 17 C12.6 16 11.8 14.4 12 12.6 Z" fill="#2f9e57" /><path d="M11.4 0.4 A10.2 10.2 0 1 0 20.6 17.1" fill="none" stroke="#3a3a3a" stroke-width="1.6" /><path d="M13.4 20.4 V23 M4.4 23.1 H21.4" fill="none" stroke="#3a3a3a" stroke-width="1.5" /></g>
<g transform="translate(1440.80 422.50)" ><path d="M10.8 4.9 H14.8 L18 1.5 H23.6 V10.9 H11.6 L10.8 7.5 Z" fill="#c8c6c4" stroke="#484644" stroke-width="1.3" stroke-linejoin="round"/><path d="M1 10.9 H11.6 L13.2 11.5 L10.8 17.1 L10.4 21.9 L7.2 19.9 L3.6 18.7 L0.8 13.9 Z" fill="#c8c6c4" stroke="#484644" stroke-width="1.3" stroke-linejoin="round"/><path d="M0.2 1.5 H7 L10.8 4.9 V7.5 L11.6 10.9 H1 L2.2 7.1 Z" fill="#86bdec" stroke="#1a78c8" stroke-width="1.4" stroke-linejoin="round"/><path d="M13.2 10.9 H23.6 V14.7 L21.6 17.9 L18.4 19.5 L16 20.7 L14 19.9 L10.8 22.3 V17.1 Z" fill="#86bdec" stroke="#1a78c8" stroke-width="1.4" stroke-linejoin="round"/></g>
<g transform="translate(1477.30 422.50)" ><path d="M16.1 -0.6 L2.2 21.4 L15.5 16.6 Z" fill="#3aa5dc" /><path d="M16.1 -0.6 L15.5 16.6 L22.4 25.4 Z" fill="#2f90d4" /><path d="M15.5 16.6 L11 18.4 L22.4 25.4 Z" fill="#0f6cbd" /></g>
<g transform="translate(1513.80 422.50)" ><path d="M0.9 16.4 A11.3 11.3 0 0 1 7 6.6 L9.3 10.6 A6.7 6.7 0 0 0 5.5 16.4 Z" fill="#fbfbfb" stroke="#3a3a3a" stroke-width="1.4" stroke-linejoin="round"/><path d="M7 6.6 A11.3 11.3 0 0 1 23.5 16.4 H18.9 A6.7 6.7 0 0 0 9.3 10.6 Z" fill="#86bdec" stroke="#1a78c8" stroke-width="1.4" stroke-linejoin="round"/><path d="M11 16 L17.6 10.6" fill="none" stroke="#323130" stroke-width="1.8" /></g>
<g transform="translate(1550.30 422.50)" ><rect x="0.7" y="3.0" width="22.7" height="17.6" fill="#fbfbfb" stroke="#3a3a3a" stroke-width="1.4"/><path d="M3.4 17.4 H20.6" fill="none" stroke="#8a8886" stroke-width="1.0" /><text x="12" y="15" font-size="10.5" text-anchor="middle" fill="#2b88d8" font-family="Liberation Sans,sans-serif" textLength="16" lengthAdjust="spacingAndGlyphs">123</text></g>
<g transform="translate(1586.80 422.50)" ><rect x="0.6" y="0.4" width="23.0" height="22.8" fill="#fbfbfb" stroke="#3a3a3a" stroke-width="1.4"/><path d="M5 4 V19.6" fill="none" stroke="#8a8886" stroke-width="1.0" /><path d="M7.1 6.9 H19.8 M7.1 14.1 H19.8" fill="none" stroke="#1a6fc0" stroke-width="2.2" /><path d="M7.1 10.2 H12.9 M7.1 17.6 H12.9" fill="none" stroke="#8a8886" stroke-width="1.0" /></g>
<g transform="translate(1404.20 459.00)" ><rect x="0.7" y="1.6" width="22.7" height="19.0" fill="#fbfbfb" stroke="#3a3a3a" stroke-width="1.4"/><path d="M3.4 13 L7.5 6.7 L11.5 13 Z" fill="#7cc28d" stroke="#2f9e57" stroke-width="1.2" /><path d="M13.2 5.5 H21.3 L17.2 12.4 Z" fill="#f0808a" stroke="#d13438" stroke-width="1.2" /><path d="M3.4 16.6 H20.7" fill="none" stroke="#8a8886" stroke-width="1.0" /></g>
<g transform="translate(1440.80 459.00)" ><path d="M23.6 12 V0.4 H0.5 V23.5 H15.8" fill="none" stroke="#3a3a3a" stroke-width="1.4" /><path d="M0.5 4.4 H23.6" fill="none" stroke="#3a3a3a" stroke-width="1.2" /><rect x="4.8" y="8.4" width="3.5" height="4.0" fill="#c8c6c4" stroke="#8a8886" stroke-width="1.0"/><rect x="4.8" y="15.3" width="3.5" height="4.0" fill="#c8c6c4" stroke="#8a8886" stroke-width="1.0"/><path d="M12.3 12.5 H25 L21 18.2 V24.4 H16.3 V18.2 Z" fill="#fbfbfb" stroke="#3a3a3a" stroke-width="1.4" /></g>
<g transform="translate(1477.30 459.00)" ><rect x="0.6" y="0.5" width="23.0" height="23.0" fill="#fbfbfb" stroke="#3a3a3a" stroke-width="1.4"/><path d="M0.6 4.4 H23.6" fill="none" stroke="#3a3a3a" stroke-width="1.2" /><path d="M0.6 10.6 H23.6 M0.6 16.8 H23.6 M8.6 4.4 V23.5 M15.8 4.4 V23.5" fill="none" stroke="#7a7876" stroke-width="1.2" /></g>
<g transform="translate(1513.80 459.00)" ><rect x="0.6" y="0.5" width="23.0" height="23.0" fill="#fbfbfb" stroke="#3a3a3a" stroke-width="1.4"/><rect x="15.8" y="4.4" width="7.6" height="18.9" fill="#86bdec"/><rect x="0.8" y="16.8" width="22.6" height="6.5" fill="#86bdec"/><path d="M0.6 4.4 H23.6" fill="none" stroke="#3a3a3a" stroke-width="1.2" /><path d="M0.6 10.6 H15.8 M8.6 4.4 V16.8" fill="none" stroke="#7a7876" stroke-width="1.2" /><path d="M15.8 10.6 H23.6 M0.6 16.8 H23.6 M8.6 16.8 V23.5 M15.8 4.4 V23.5" fill="none" stroke="#1a78c8" stroke-width="1.2" /><rect x="0.6" y="0.5" width="23.0" height="23.0" fill="none" stroke="#3a3a3a" stroke-width="1.4"/></g>
<g transform="translate(1550.30 459.00)" ><text x="12" y="20.4" font-size="22" font-weight="bold" text-anchor="middle" fill="#1a78c8" font-family="Liberation Sans,sans-serif" textLength="12.5" lengthAdjust="spacingAndGlyphs">R</text></g>
<g transform="translate(1586.80 459.00)" ><text x="12" y="18.6" font-size="22.5" font-weight="bold" text-anchor="middle" fill="#1a78c8" font-family="Liberation Sans,sans-serif" textLength="24.5" lengthAdjust="spacingAndGlyphs">Py</text></g>
<g transform="translate(1404.20 495.50)" ><path d="M0.9 0 V22.9 H23.6" fill="none" stroke="#3a3a3a" stroke-width="1.5"/><path d="M1.2 4.6 H17" fill="none" stroke="#1a78c8" stroke-width="1.2" /><circle cx="19.6" cy="4.6" r="2.8" fill="#86bdec" stroke="#1a78c8" stroke-width="1.3"/><path d="M1.2 10.9 H12.6 M1.2 16.7 H7.6" fill="none" stroke="#7a7876" stroke-width="1.1" /><circle cx="14.2" cy="10.9" r="1.5" fill="#c8c6c4" stroke="#7a7876" stroke-width="1.0"/><circle cx="9.2" cy="16.7" r="1.5" fill="#c8c6c4" stroke="#7a7876" stroke-width="1.0"/></g>
<g transform="translate(1440.80 495.50)" ><path d="M8.3 11.2 H15.2 M12.3 3.2 V19.3 M12.3 3.2 H15.2 M12.3 19.3 H15.2" fill="none" stroke="#3a3a3a" stroke-width="1.5" /><rect x="0.6" y="8.6" width="7.7" height="5.2" fill="#86bdec" stroke="#1a78c8" stroke-width="1.3"/><rect x="15.2" y="0.7" width="8.5" height="5.0" fill="#86bdec" stroke="#1a78c8" stroke-width="1.3"/><rect x="15.2" y="8.6" width="8.5" height="5.2" fill="#86bdec" stroke="#1a78c8" stroke-width="1.3"/><rect x="15.2" y="16.7" width="8.5" height="5.1" fill="#86bdec" stroke="#1a78c8" stroke-width="1.3"/></g>
<g transform="translate(1477.30 495.50)" ><path d="M0.8 1.8 H23.5 V16.6 H10.2 L4.8 22.4 V16.6 H0.8 Z" fill="#fbfbfb" stroke="#1a78c8" stroke-width="1.6" /></g>
<g transform="translate(1513.80 495.50)" ><path d="M4.6 6.8 V0.8 H15.6 L20.8 6 V22.8 H3.4 V11.6" fill="#fbfbfb" stroke="#3a3a3a" stroke-width="1.4" /><path d="M15.4 1 V6.2 H20.6" fill="none" stroke="#3a3a3a" stroke-width="1.2" /><circle cx="4.1" cy="9.2" r="2.3" fill="#86bdec" stroke="#1a78c8" stroke-width="1.2"/><path d="M10 10.9 H18 M7.1 15 H14.6" fill="none" stroke="#2b88d8" stroke-width="1.1" /></g>
<g transform="translate(1550.30 495.50)" ><path d="M4.4 3 H1 C1 8 3 11 7.4 12.2 M19.6 3 H23 C23 8 21 11 16.6 12.2" fill="none" stroke="#3a3a3a" stroke-width="1.5" /><path d="M4.4 2 C4.4 9 6 14 10.8 16.2 L9 20.6 H15 L13.2 16.2 C18 14 19.6 9 19.6 2" fill="#fbfbfb" stroke="#3a3a3a" stroke-width="1.5" /><rect x="5.2" y="0.7" width="13.6" height="2.7" fill="#86bdec" stroke="#1a78c8" stroke-width="1.3"/><path d="M7 20.8 H17 L18 23 H6 Z" fill="#86bdec" stroke="#1a78c8" stroke-width="1.3" stroke-linejoin="round"/></g>
<g transform="translate(1586.80 495.50)" ><path d="M2.8 0 H15.6 L21.2 5.6 V24 H2.8 Z" fill="#fbfbfb" stroke="#3a3a3a" stroke-width="1.5" /><path d="M15.4 0.2 V5.8 H21" fill="none" stroke="#3a3a3a" stroke-width="1.2" /><rect x="5.4" y="13.8" width="2.4" height="7.5" fill="#323130"/><rect x="10.1" y="17.2" width="2.7" height="4.1" fill="#323130"/><rect x="15.2" y="10.3" width="2.8" height="11.0" fill="#323130"/></g>
<g transform="translate(1404.20 532.00)" ><rect x="0.8" y="3.3" width="22.6" height="17.3" fill="#fbfbfb" stroke="#3a3a3a" stroke-width="1.4"/><path d="M3.4 18.2 H20.6" fill="none" stroke="#8a8886" stroke-width="1.0" /><text x="13.4" y="15.6" font-size="10.5" text-anchor="middle" fill="#4aa0e0" font-family="Liberation Sans,sans-serif" textLength="15" lengthAdjust="spacingAndGlyphs">123</text><path d="M3.2 -0.6 H9.9 L7 4.9 H10.4 L-0.4 14.2 L3.4 7.3 H-0.3 Z" fill="#fbcf74" stroke="#e07a1c" stroke-width="1.1" stroke-linejoin="round"/></g>
<g transform="translate(1440.80 532.00)" ><path d="M9.5 0.4 H23.6 V12 M0.5 14 V23.5 H15.8" fill="none" stroke="#3a3a3a" stroke-width="1.4" /><path d="M9 4.4 H23.6" fill="none" stroke="#3a3a3a" stroke-width="1.2" /><rect x="4.8" y="8.4" width="3.5" height="4.0" fill="#c8c6c4" stroke="#8a8886" stroke-width="1.0"/><rect x="4.8" y="15.3" width="3.5" height="4.0" fill="#c8c6c4" stroke="#8a8886" stroke-width="1.0"/><path d="M12.3 12.5 H25 L21 18.2 V24.4 H16.3 V18.2 Z" fill="#fbfbfb" stroke="#3a3a3a" stroke-width="1.4" /><path d="M3.2 -0.6 H9.9 L7 4.9 H10.4 L-0.4 14.2 L3.4 7.3 H-0.3 Z" fill="#fbcf74" stroke="#e07a1c" stroke-width="1.1" stroke-linejoin="round"/></g>
<g transform="translate(1477.30 532.00)" ><path d="M8.95 0.5 H23.5 V10.1 M0.4 13.5 V23.2 H15.3" fill="none" stroke="#1f6fb5" stroke-width="2.0" /><path d="M13.8 6.75 L17.2 5.25 L20.2 7.1 L19.45 10.1 L17.2 11.6 L17.6 14.25 L14.6 16.5 L13.8 19.5 L15.3 22.1 H3.7 L8.95 19.5 L10.1 15.75 L10.8 12.75 L13.8 10.5 Z" fill="#86bdec" stroke="#5ea6e0" stroke-width="0.8" /><path d="M-0.8 1.6 C-0.8 -1.4 7.1 -1.4 7.1 1.6 V8 L2.95 12.75 L-0.8 8 Z" fill="#e36c0a" /><circle cx="2.7" cy="3.7" r="1.3" fill="#fff"/><circle cx="20.6" cy="20.2" r="3.6" fill="#e36c0a"/><circle cx="23.2" cy="13.7" r="2.0" fill="#e36c0a"/></g>
<g transform="translate(1513.80 532.00)" ><path d="M9.96 1.1 L0.4 12 L9.96 22.9 L11.8 20.8 M9.96 1.1 L11.8 3.2 M8.9 6.6 L13.7 1.1 L24 12 L13.7 22.9 L8.9 17.4 M8.9 6.6 L18.85 17.45 M18.85 6.55 L8.9 17.4" fill="#fbfbfb" stroke="#9b2fae" stroke-width="1.4" stroke-linejoin="round" stroke-linecap="round"/></g>
<g transform="translate(1550.30 532.00)" ><path d="M0.6 2.2 L15.85 1.6 L23.6 11.6 L15.85 20.6 L0.6 20.25 L8.7 11.3 Z" fill="#fbfbfb" stroke="#1a78c8" stroke-width="1.6" stroke-linejoin="round"/><path d="M8.7 11.3 L15.6 2.2 M8.9 20.4 L20 7.4" fill="none" stroke="#1a78c8" stroke-width="1.4" /></g>
<g transform="translate(1586.80 532.00)" ><circle cx="3.7" cy="9.3" r="1.1" fill="#323130"/><circle cx="11.7" cy="9.3" r="1.1" fill="#323130"/><circle cx="19.8" cy="9.3" r="1.1" fill="#323130"/></g>
<!-- gen_data -->
<path d="M1974.00 182.80 L1981.10 190.50 L1974.00 198.20 M1982.30 182.80 L1989.40 190.50 L1982.30 198.20" fill="none" stroke="#252423" stroke-width="1.50"/>
<g fill="none" stroke="#605e5c" stroke-width="1.4"><circle cx="1654.4" cy="239" r="5.6"/><path d="M1650.4 243.1 L1641.8 251"/></g>
<path d="M1635.60 281.60 L1642.60 288.80 L1649.60 281.60" fill="none" stroke="#605e5c" stroke-width="1.30"/>
<g fill="none" stroke="#323130" stroke-width="1.4"><rect x="1655.6" y="278.6" width="15.2" height="14.8" rx="2.6"/><path d="M1655.6 283.6 H1670.8 M1655.6 288.4 H1670.8 M1660.8 278.6 V293.4 M1665.7 278.6 V293.4"/></g>
<path d="M1659.4 405.4 L1666.0 412.2 L1659.4 419.1" fill="none" stroke="#605e5c" stroke-width="1.3"/>
<g fill="none" stroke="#323130" stroke-width="1.3"><rect x="1701.2" y="405.2" width="14.4" height="13.6" rx="2.4"/><path d="M1701.2 409.2 H1715.6"/></g>
<rect x="1704.2" y="411.6" width="1.7" height="1.7" fill="#323130"/>
<rect x="1707.6" y="411.6" width="1.7" height="1.7" fill="#323130"/>
<rect x="1711.0" y="411.6" width="1.7" height="1.7" fill="#323130"/>
<rect x="1704.2" y="414.9" width="1.7" height="1.7" fill="#323130"/>
<rect x="1707.6" y="414.9" width="1.7" height="1.7" fill="#323130"/>
<path d="M1714.6 438.6 V436.6 H1702.2 L1708.4 443.6 L1702.2 450.6 H1714.6 V448.6" fill="none" stroke="#323130" stroke-width="1.4" stroke-linejoin="miter"/>
<!-- gen_ribbon -->
</svg>
<svg width="2000" height="170" viewBox="0 0 2000 170" style="z-index:7">
<g fill="none" stroke="#fff" stroke-width="1.5"><path d="M1893 17.5 V29.3 H1908.3 V25.5"/><path d="M1896.8 25.5 C1897.5 19.5 1901 16.6 1905.6 16.4 V12 L1912 18.2 L1905.6 24.2 V20 C1901.5 20 1898.8 21.6 1896.8 25.5 Z" stroke-linejoin="round"/></g>
<path d="M1968.60 18.80 L1974.80 25.20 L1981.00 18.80" fill="none" stroke="#fff" stroke-width="1.60"/>
<path d="M1982.50 156.50 L1987.75 150.50 L1993.00 156.50" fill="none" stroke="#252423" stroke-width="1.80"/>
<path d="M253.80 129.60 L257.20 133.60 L260.60 129.60" fill="none" stroke="#3a3a3a" stroke-width="1.70"/>
<path d="M401.70 129.60 L405.30 133.60 L408.90 129.60" fill="none" stroke="#3a3a3a" stroke-width="1.70"/>
<path d="M676.80 129.60 L680.55 133.60 L684.30 129.60" fill="none" stroke="#3a3a3a" stroke-width="1.70"/>
<path d="M761.60 129.60 L765.35 133.60 L769.10 129.60" fill="none" stroke="#3a3a3a" stroke-width="1.70"/>
<path d="M1020.50 129.60 L1024.25 133.60 L1028.00 129.60" fill="none" stroke="#3a3a3a" stroke-width="1.70"/>
<path d="M1238.20 129.00 L1241.90 133.40 L1245.60 129.00" fill="none" stroke="#b5b3b1" stroke-width="1.50"/>
<g opacity="0.55"><rect x="19.6" y="60.5" width="26.3" height="31" fill="#fdf3e6" stroke="#f0b26a" stroke-width="1.6"/><path d="M25.5 64.5 V59.5 H30 C30 55.5 35.5 55.5 35.5 59.5 H40 V64.5 Z" fill="#fafafa" stroke="#b0aeac" stroke-width="1.3"/><rect x="37" y="72" width="16" height="21.5" fill="#fafafa" stroke="#a19f9d" stroke-width="1.5"/></g><g fill="none" stroke="#3a3a3a" stroke-width="1.4"><path d="M70.6 53.6 L78.8 70.2 M79.6 53.6 L71.4 70.2"/></g><g fill="none" stroke="#1f6fb8" stroke-width="1.4"><circle cx="70.9" cy="71.7" r="2"/><circle cx="79.3" cy="71.7" r="2"/></g><g fill="#fafafa" stroke="#3a3a3a" stroke-width="1.4"><path d="M65.2 85.2 H73.5 L77 88.5 V102.3 H65.2 Z"/><path d="M72.8 90.6 H80.5 L85 95 V104.6 H72.8 Z"/><path d="M80.3 90.8 V95.2 H84.8" fill="none"/><path d="M76 98.3 H82 M76 100.8 H82" stroke-width="1.1"/></g><g stroke-linejoin="round"><path d="M65.8 126.5 L76 120.5 L83 127.5 L74.2 134.8 Z" fill="#fbd9b5" stroke="#d9690f" stroke-width="1.5"/><path d="M70 131 L76.5 127 L74.2 134.8 Z" fill="#f5a54a" stroke="none"/><path d="M76 120.8 L79.3 118.4 L85 124.6 L82.8 127.4 Z" fill="#fafafa" stroke="#3a3a3a" stroke-width="1.4"/><path d="M80.3 119.6 L82.6 116.7 C84 115.3 86 117.4 84.8 118.8 L82.6 121.8" fill="#fafafa" stroke="#3a3a3a" stroke-width="1.4"/></g><g fill="none" stroke="#3a3a3a" stroke-width="1.50"><ellipse cx="242.3" cy="60.8" rx="13.3" ry="4.6"/><path d="M229 60.8 V87 C229 89.5 234 91.4 242 91.6 M255.6 60.8 V74"/></g><rect x="243.60" y="74.60" width="19.60" height="19.40" fill="#fafafa" stroke="#605e5c" stroke-width="1.4"/><rect x="244.30" y="75.30" width="18.20" height="3.60" fill="#c8c6c4"/><path d="M250.13 78.90 V94.00 M256.67 78.90 V94.00 M243.60 79.20 H263.20 M243.60 84.13 H263.20 M243.60 89.07 H263.20" stroke="#7a7876" stroke-width="1.2" fill="none"/><path d="M292.80 56.00 H311.00 L319.20 64.20 V91.60 H292.80 Z M311.00 56.00 V64.20 H319.20" fill="none" stroke="#7a7876" stroke-width="1.50" stroke-linejoin="miter"/><rect x="308.2" y="76.4" width="18.3" height="18.2" rx="1.2" fill="#107c41"/><path d="M313.3 80.6 L321.4 90.4 M321.4 80.6 L313.3 90.4" stroke="#fff" stroke-width="2" fill="none"/><circle cx="392.3" cy="76" r="17" fill="none" stroke="#3a3a3a" stroke-width="1.45"/><path d="M382.9 63.3 C386 58 390 55.2 393.1 55.1 C397 55.2 400 58 401 61.8 C398 61 394 61.2 391.5 62 C389.5 62.8 388 63.8 386.9 64.9 Z" fill="#3a3a3a"/><path d="M383.4 63 C377 66 374.6 70 374.6 75 C374.6 79 375.8 81.5 377.8 83.4 C380 84.4 383 84.8 385.6 84.6 C383 81 382.4 77 382.6 74.5 C382.8 70.5 383.8 67 385.6 64.2 Z" fill="#3a3a3a"/><g fill="none" stroke="#3a3a3a" stroke-width="1.3"><path d="M386.6 64.6 C388 69 390 75 396.4 81.4"/><path d="M377.8 83.2 C383 85.3 389 85.3 393.6 83.7 C397 82.4 399 79.5 400.7 78.1 C402.5 76.8 404 76.4 404.8 76.6 C406.5 76.9 408 78 408.9 79.1"/></g><path d="M454.50 56.00 H472.50 L481.10 64.60 V91.60 H454.50 Z M472.50 56.00 V64.60 H481.10" fill="none" stroke="#3a3a3a" stroke-width="1.50" stroke-linejoin="miter"/><g fill="#fafafa" stroke="#e07a1c" stroke-width="1.5"><path d="M472.6 75.6 V90.6 C472.6 94.6 488.4 94.6 488.4 90.6 V75.6"/><ellipse cx="480.5" cy="75.6" rx="7.9" ry="3.1"/></g><g fill="none" stroke="#3a3a3a" stroke-width="1.6"><path d="M514.5 56.2 H538.4 V91.5 H502.9 V66.5"/></g><rect x="514.5" y="56.8" width="23.5" height="4" fill="#c8c6c4"/><g stroke="#8a8886" stroke-width="1.2" fill="none"><path d="M521.5 61.5 H538 M503.5 71.8 H538 M503.5 81.5 H538 M514.8 72 V91 M526.6 61.5 V91"/></g><path d="M509.4 53.6 V72.4 M500.2 63 H518.8" stroke="#2f9e57" stroke-width="1.8" fill="none"/><g fill="none" stroke="#3a3a3a" stroke-width="1.4"><path d="M576.67 84.62 C574.78 86.74 572.43 87.68 570.54 86.98 C566.78 85.33 564.42 80.15 565.36 75.44 C566.54 68.84 572.90 60.83 580.44 60.13 C584.20 60.13 587.50 61.78 588.91 63.66 C591.74 66.49 593.15 69.78 592.68 72.61 C592.21 77.32 588.91 80.62 585.15 80.62 C582.32 80.62 579.96 79.67 578.55 78.26"/><path d="M588.91 63.66 C590.80 61.30 593.15 60.36 595.04 60.74 C599.28 61.78 601.63 66.96 601.16 71.67 C600.45 79.20 594.10 86.74 585.15 87.21 C581.85 87.21 578.55 85.80 576.67 84.62 C574.31 82.50 572.90 79.20 573.37 75.91 C573.84 71.20 576.67 67.90 580.44 67.43 C584.20 67.19 587.97 68.84 589.39 72.61"/><circle cx="583.3" cy="74" r="5.4"/></g><path d="M641.20 56.00 H659.00 L667.60 64.60 V91.60 H641.20 Z M659.00 56.00 V64.60 H667.60" fill="none" stroke="#3a3a3a" stroke-width="1.50" stroke-linejoin="miter"/><circle cx="666.1" cy="84.7" r="9.2" fill="#fafafa" stroke="#1a78c8" stroke-width="1.6"/><path d="M666.3 79.3 V85.3 H671" fill="none" stroke="#3a3a3a" stroke-width="1.3"/><rect x="732.3" y="56.1" width="35.4" height="35.4" fill="none" stroke="#3a3a3a" stroke-width="1.6"/><rect x="733" y="57" width="34" height="4.2" fill="#c8c6c4"/><g stroke="#8a8886" stroke-width="1.2" fill="none"><path d="M733 62 H767 M733 71.5 H762 M733 80.8 H752 M744.3 62 V91 M756 62 V76"/></g><g transform="translate(743.60 94.60) rotate(-44.79)"><path d="M0 0 L6.5 -3.4 H33.4 C36.4 -3.4 36.4 3.4 33.4 3.4 H6.5 Z" fill="#fafafa" stroke="#1a78c8" stroke-width="1.5" stroke-linejoin="round"/><path d="M0 0 L6.5 -3.4 V3.4 Z" fill="#86bdec" stroke="#1a78c8" stroke-width="1.2" stroke-linejoin="round"/><path d="M30.4 -3.4 V3.4" stroke="#1a78c8" stroke-width="1.3"/></g><path d="M801.00 56.00 H818.80 L827.40 64.60 V91.60 H801.00 Z M818.80 56.00 V64.60 H827.40" fill="none" stroke="#3a3a3a" stroke-width="1.50" stroke-linejoin="miter"/><circle cx="825.8" cy="84.8" r="11.5" fill="#fafafa"/><g fill="none" stroke="#2f9e57" stroke-width="1.6"><path d="M817.3 82.5 A8.9 8.9 0 0 1 833.6 80.2"/><path d="M834.3 87 A8.9 8.9 0 0 1 818 89.4"/><path d="M834.6 75.6 V80.6 H829.6"/><path d="M817 94 V89 H822"/></g><rect x="896" y="63" width="10" height="29" fill="#c8c6c4" stroke="#a19f9d" stroke-width="1.2"/><rect x="884.8" y="56.3" width="10.8" height="35.4" fill="#fafafa" stroke="#3a3a3a" stroke-width="1.5"/><rect x="874.4" y="71" width="10.4" height="20.7" fill="#86bdec" stroke="#1a78c8" stroke-width="1.5"/><path d="M902 75.5 V94.6 M892.2 85 H911.7" stroke="#fafafa" stroke-width="4.5" fill="none"/><path d="M902 75.5 V94.6 M892.2 85 H911.7" stroke="#2f9e57" stroke-width="1.8" fill="none"/><rect x="924.4" y="59" width="37.8" height="30.4" fill="none" stroke="#3a3a3a" stroke-width="1.4"/><rect x="922.3" y="56.9" width="4.2" height="4.2" fill="#1a78c8"/><rect x="960.1" y="56.9" width="4.2" height="4.2" fill="#1a78c8"/><rect x="922.3" y="87.3" width="4.2" height="4.2" fill="#1a78c8"/><rect x="960.1" y="87.3" width="4.2" height="4.2" fill="#1a78c8"/><path d="M935.8 83.4 L943.3 65 L950.8 83.4 M938.4 77.2 H948.2" fill="none" stroke="#2b88d8" stroke-width="1.5"/><g fill="none" stroke="#3a3a3a" stroke-width="1.5"><path d="M985.3 91.6 V71 H995.2 V56.3 H1006.2 V63.4 H1016.2 V91.6 Z M995.2 71 V91.6 M1006.2 63.4 V91.6"/></g><g transform="translate(995.20 94.60) rotate(-45.21)"><path d="M0 0 L6.5 -3.4 H33.1 C36.1 -3.4 36.1 3.4 33.1 3.4 H6.5 Z" fill="#fafafa" stroke="#1a78c8" stroke-width="1.5" stroke-linejoin="round"/><path d="M0 0 L6.5 -3.4 V3.4 Z" fill="#86bdec" stroke="#1a78c8" stroke-width="1.2" stroke-linejoin="round"/><path d="M30.1 -3.4 V3.4" stroke="#1a78c8" stroke-width="1.3"/></g><rect x="1075.20" y="56.10" width="24" height="35.4" fill="#fafafa" stroke="#3a3a3a" stroke-width="1.6"/><rect x="1079.50" y="69.40" width="3.6" height="3.6" fill="#323130"/><rect x="1085.60" y="69.40" width="3.6" height="3.6" fill="#323130"/><rect x="1091.70" y="69.40" width="3.6" height="3.6" fill="#323130"/><rect x="1079.50" y="77.20" width="3.6" height="3.6" fill="#323130"/><rect x="1085.60" y="77.20" width="3.6" height="3.6" fill="#323130"/><rect x="1091.70" y="77.20" width="3.6" height="3.6" fill="#323130"/><rect x="1079.50" y="85.00" width="3.6" height="3.6" fill="#323130"/><rect x="1085.60" y="85.00" width="3.6" height="3.6" fill="#323130"/><rect x="1091.70" y="85.00" width="3.6" height="3.6" fill="#323130"/><rect x="1079.5" y="60.4" width="15.8" height="5.2" fill="#86bdec" stroke="#1a78c8" stroke-width="1.2"/><rect x="1139.40" y="56.10" width="24" height="35.4" fill="#fafafa" stroke="#3a3a3a" stroke-width="1.6"/><rect x="1143.70" y="69.40" width="3.6" height="3.6" fill="#323130"/><rect x="1149.80" y="69.40" width="3.6" height="3.6" fill="#323130"/><rect x="1155.90" y="69.40" width="3.6" height="3.6" fill="#323130"/><rect x="1143.70" y="77.20" width="3.6" height="3.6" fill="#323130"/><rect x="1149.80" y="77.20" width="3.6" height="3.6" fill="#323130"/><rect x="1155.90" y="77.20" width="3.6" height="3.6" fill="#323130"/><rect x="1143.70" y="85.00" width="3.6" height="3.6" fill="#323130"/><rect x="1149.80" y="85.00" width="3.6" height="3.6" fill="#323130"/><rect x="1155.90" y="85.00" width="3.6" height="3.6" fill="#323130"/><rect x="1148" y="60.6" width="11.5" height="4.6" fill="#c8c6c4" stroke="#8a8886" stroke-width="1"/><path d="M1138.5 53.2 H1147.2 L1143.5 62 H1148.8 L1133.8 78.2 L1138 66.2 H1131.6 Z" fill="#fbd27a" stroke="#e07a1c" stroke-width="1.4" stroke-linejoin="round"/><g fill="none" stroke="#a6d0ec" stroke-width="1.5"><path d="M1243 56.2 H1228.8 V91.6 H1255 V74"/><path d="M1246.5 58.5 L1250.8 54 L1262.5 65.5 L1258.2 70 Z"/><path d="M1254.5 57.5 L1258.3 53.7 L1263.8 59.2 L1260 63"/><path d="M1233.8 72 L1239.3 66.5 L1249.2 76.4 L1245.5 83.5 Z M1237.5 71.8 L1245 79.3"/></g><path d="M1244.6 60.4 L1256.3 72" stroke="#a6d0ec" stroke-width="3" fill="none"/><g fill="none" stroke="#3a3a3a" stroke-width="1.5"><rect x="1314.2" y="77.6" width="13" height="13.8" rx="2.6"/><path d="M1320.5 77.6 V70.5 C1320.5 68.2 1322 67 1324 67 H1331.2 C1333.2 67 1334.6 68.2 1334.6 70.5 V91.4 H1327.2"/><path d="M1327.8 67 V59.6 C1327.8 57.2 1329.2 56 1331.2 56 H1337.6 C1339.8 56 1341.2 57.2 1341.2 59.6 V72.5 M1334.6 91.4 H1337.8"/></g><path d="M1340.8 94.6 V75 M1333 82.8 L1340.8 75 L1348.5 82.8" fill="none" stroke="#1a78c8" stroke-width="1.6"/>
</svg>
</body></html>
